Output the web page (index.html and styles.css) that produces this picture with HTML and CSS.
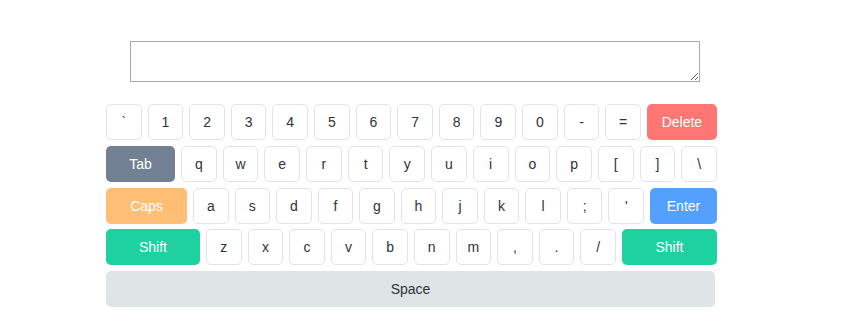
FILE: index.html
```html
<!DOCTYPE html>
<html lang="en">
<head>
    <meta charset="UTF-8">
    <meta name="viewport" content="width=device-width, initial-scale=1.0">
    <title>Virtual Keyboard</title>
    <link rel="stylesheet" href="styles.css">
</head>
<body>

    <!-- Output Area -->
    <textarea class="output" id="output"></textarea>

    <!-- Keyboard -->
    <div class="keyboard">
        <div class="row">
            <button class="key">`</button>
            <button class="key">1</button>
            <button class="key">2</button>
            <button class="key">3</button>
            <button class="key">4</button>
            <button class="key">5</button>
            <button class="key">6</button>
            <button class="key">7</button>
            <button class="key">8</button>
            <button class="key">9</button>
            <button class="key">0</button>
            <button class="key">-</button>
            <button class="key">=</button>
            <button class="key special delete">Delete</button>
        </div>
        <div class="row">
            <button class="key special tab">Tab</button>
            <button class="key">q</button>
            <button class="key">w</button>
            <button class="key">e</button>
            <button class="key">r</button>
            <button class="key">t</button>
            <button class="key">y</button>
            <button class="key">u</button>
            <button class="key">i</button>
            <button class="key">o</button>
            <button class="key">p</button>
            <button class="key">[</button>
            <button class="key">]</button>
            <button class="key">\</button>
        </div>
        <div class="row">
            <button class="key special caps">Caps</button>
            <button class="key">a</button>
            <button class="key">s</button>
            <button class="key">d</button>
            <button class="key">f</button>
            <button class="key">g</button>
            <button class="key">h</button>
            <button class="key">j</button>
            <button class="key">k</button>
            <button class="key">l</button>
            <button class="key">;</button>
            <button class="key">'</button>
            <button class="key special enter">Enter</button>
        </div>
        <div class="row">
            <button class="key special shift shift-left">Shift</button>
            <button class="key">z</button>
            <button class="key">x</button>
            <button class="key">c</button>
            <button class="key">v</button>
            <button class="key">b</button>
            <button class="key">n</button>
            <button class="key">m</button>
            <button class="key">,</button>
            <button class="key">.</button>
            <button class="key">/</button>
            <button class="key special shift shift-right">Shift</button>
        </div>
        <div class="row">
            <button class="key space">Space</button>
        </div>
    </div>

</body>
</html>
```

FILE: styles.css
```css
/* Basic Reset */
* {
    margin: 0;
    padding: 0;
    box-sizing: border-box;
}

body {
    font-family: 'Liberation Sans', Arial, sans-serif;
    color: #2d3436;
    background: #fff;
}

/* Output Area */
.output {
    display: block;
    width: 570px;
    height: 41px;
    margin: 41px 0 0 130px;
    border: 1px solid #a9a9a9;
    font-family: 'Liberation Mono', monospace;
    font-size: 13px;
    padding: 2px;
}

/* Keyboard */
.keyboard {
    width: 611px;
    margin: 22px 0 0 106px;
    display: flex;
    flex-direction: column;
    gap: 5.75px;
}

.row {
    display: flex;
    gap: 6px;
}

.key {
    flex: 1;
    height: 36px;
    background: #fff;
    border: 1px solid #e3e3e3;
    border-radius: 5px;
    font-family: inherit;
    font-size: 14px;
    color: #2d3436;
    cursor: pointer;
}

.key:hover {
    background: #f5f6fa;
}

/* Special Keys */
.special {
    flex: none;
    border: none;
    color: #fff;
}

.delete {
    width: 70px;
    background: #ff7675;
}

.tab {
    width: 69px;
    background: #718093;
}

.caps {
    width: 81px;
    background: #ffbe76;
}

.enter {
    width: 67px;
    background: #54a0ff;
}

.shift {
    background: #1dd1a1;
}

.shift-left {
    width: 94px;
}

.shift-right {
    width: 95px;
}

.space {
    flex: none;
    width: 609px;
    border: none;
    background: #dfe4e6;
}
```
